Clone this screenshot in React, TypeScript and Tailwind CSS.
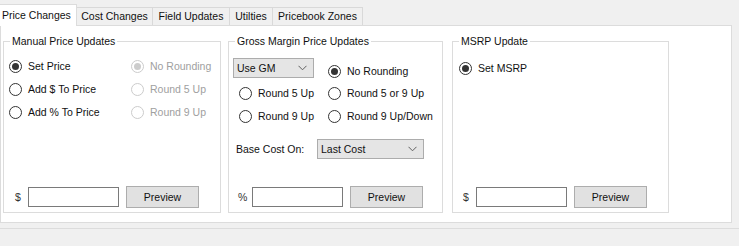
import React from "react";

function Radio({ label, checked = false, disabled = false, labelGap = "ml-[6px]" }: { label: string; checked?: boolean; disabled?: boolean; labelGap?: string }) {
  return (
    <div className="flex items-center h-[23px]">
      <span
        className={
          "w-[13px] h-[13px] rounded-full border bg-white flex items-center justify-center shrink-0 " +
          (disabled ? "border-[#cccccc]" : "border-[#333333]")
        }
      >
        {checked && (
          <span className={"w-[7px] h-[7px] rounded-full " + (disabled ? "bg-[#cccccc]" : "bg-[#333333]")} />
        )}
      </span>
      <span className={labelGap + " whitespace-nowrap " + (disabled ? "text-[#a0a0a0]" : "text-[#111111]")}>{label}</span>
    </div>
  );
}

function Chevron() {
  return (
    <svg width="9" height="6" viewBox="0 0 9 6" className="shrink-0">
      <polyline points="0.5,0.8 4.5,4.8 8.5,0.8" fill="none" stroke="#606060" strokeWidth="1" />
    </svg>
  );
}

function Select({ value, w }: { value: string; w: string }) {
  return (
    <div className={w + " h-[20px] bg-[#e5e5e5] border border-[#acacac] flex items-center justify-between pl-[3px] pr-[6px]"}>
      <span className="text-[#111111]">{value}</span>
      <Chevron />
    </div>
  );
}

function BottomRow({ sym, symPad }: { sym: string; symPad: string }) {
  return (
    <div className="flex items-center mt-auto mb-[4px] h-[22px]">
      <span className={symPad + " text-[#333333]"}>{sym}</span>
      <div className="w-[91px] h-[20px] bg-white border border-[#7a7a7a]" />
      <div className="ml-[7px] w-[73px] h-[22px] bg-[#e1e1e1] border border-[#adadad] flex items-center justify-center text-[#111111]">
        Preview
      </div>
    </div>
  );
}

function Group({ title, w, children }: { title: string; w: string; children: React.ReactNode }) {
  return (
    <fieldset className={w + " h-[178px] border border-[#dcdcdc] flex flex-col"}>
      <legend className="ml-[6px] px-[2px] leading-[13px] text-[#111111]">{title}</legend>
      {children}
    </fieldset>
  );
}

export default function App() {
  const tabs = [
    { label: "Price Changes", w: "w-[77px]", active: true },
    { label: "Cost Changes", w: "w-[76px]" },
    { label: "Field Updates", w: "w-[77px]" },
    { label: "Utilties", w: "w-[43px]" },
    { label: "Pricebook Zones", w: "w-[90px]" },
  ];
  return (
    <div
      className="w-[739px] h-[246px] bg-[#f0f0f0] overflow-hidden flex flex-col text-[10.5px] leading-[13px]"
      style={{ fontFamily: '"Liberation Sans", Arial, sans-serif' }}
    >
      {/* tab strip */}
      <div className="flex items-end h-[25px] shrink-0">
        {tabs.map((t) =>
          t.active ? (
            <div
              key={t.label}
              className={t.w + " h-[22px] bg-white border-t border-r border-[#dcdcdc] flex items-start pt-[4px] pl-[2px] text-[#111111] relative z-10 -mb-[1px]"}
            >
              {t.label}
            </div>
          ) : (
            <div
              key={t.label}
              className={t.w + " h-[18px] bg-[#f0f0f0] border-t border-r border-[#d9d9d9] flex items-center justify-center text-[#111111]"}
            >
              {t.label}
            </div>
          )
        )}
      </div>
      {/* panel */}
      <div className="w-[732px] h-[198px] shrink-0 bg-white border border-[#dcdcdc] flex items-start pt-[9px] pl-[2px]">
        <Group title="Manual Price Updates" w="w-[218px]">
          <div className="flex mt-[7px] pl-[5px]">
            <div className="w-[122px] flex flex-col">
              <Radio label="Set Price" checked />
              <Radio label="Add $ To Price" />
              <Radio label="Add % To Price" />
            </div>
            <div className="flex flex-col">
              <Radio label="No Rounding" checked disabled />
              <Radio label="Round 5 Up" disabled />
              <Radio label="Round 9 Up" disabled />
            </div>
          </div>
          <BottomRow sym="$" symPad="ml-[11px] w-[13px]" />
        </Group>
        <div className="w-[7px] shrink-0" />
        <Group title="Gross Margin Price Updates" w="w-[215px]">
          <div className="flex flex-col pl-[4px] mt-[10px]">
            <div className="flex items-start h-[24px]">
              <Select value="Use GM" w="w-[81px]" />
              <div className="ml-[14px] mt-[2px]">
                <Radio label="No Rounding" checked />
              </div>
            </div>
            <div className="flex ml-[6px]">
              <div className="w-[89px]">
                <Radio label="Round 5 Up" />
              </div>
              <Radio label="Round 5 or 9 Up" />
            </div>
            <div className="flex ml-[6px]">
              <div className="w-[89px]">
                <Radio label="Round 9 Up" />
              </div>
              <Radio label="Round 9 Up/Down" />
            </div>
            <div className="flex items-center mt-[11px]">
              <span className="ml-[3px] w-[81px] text-[#111111]">Base Cost On:</span>
              <Select value="Last Cost" w="w-[107px]" />
            </div>
          </div>
          <BottomRow sym="%" symPad="ml-[9px] w-[14px]" />
        </Group>
        <div className="w-[9px] shrink-0" />
        <Group title="MSRP Update" w="w-[217px]">
          <div className="flex flex-col mt-[9px] pl-[6px]">
            <Radio label="Set MSRP" checked />
          </div>
          <BottomRow sym="$" symPad="ml-[10px] w-[13px]" />
        </Group>
      </div>
      <div className="h-[5px] shrink-0" />
      <div className="w-[739px] h-[1px] bg-[#dcdcdc] shrink-0" />
    </div>
  );
}
